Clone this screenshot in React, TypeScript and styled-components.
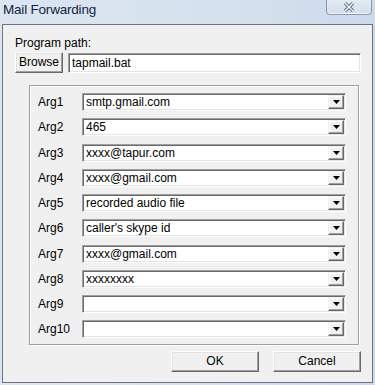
import React from "react";
import styled, { createGlobalStyle } from "styled-components";

const args = [
  "smtp.gmail.com",
  "465",
  "xxxx@tapur.com",
  "xxxx@gmail.com",
  "recorded audio file",
  "caller's skype id",
  "xxxx@gmail.com",
  "xxxxxxxx",
  "",
  "",
];

const App: React.FC = () => {
  return (
    <Window>
      <GlobalStyle />
      {/* 타이틀 바 */}
      <TitleBar>
        <Title>Mail Forwarding</Title>
        <CloseButton>
          <svg width="14" height="10" viewBox="0 0 14 10">
            <path d="M3 1 L11 9 M11 1 L3 9" stroke="#5b6b80" strokeWidth="3.2" />
            <path d="M3 1 L11 9 M11 1 L3 9" stroke="#f4f7fb" strokeWidth="1.4" />
          </svg>
        </CloseButton>
      </TitleBar>

      <Panel>
        <Label>Program path:</Label>
        <PathRow>
          <Button $width={48}>Browse</Button>
          <TextBox>tapmail.bat</TextBox>
        </PathRow>

        <GroupBox>
          {args.map((value, i) => (
            <ArgRow key={i}>
              <ArgLabel>Arg{i + 1}</ArgLabel>
              <Combo>
                <ComboText>{value}</ComboText>
                <DropButton>
                  <svg width="7" height="4" viewBox="0 0 7 4">
                    <path d="M0 0 H7 L3.5 4 Z" fill="#000" />
                  </svg>
                </DropButton>
              </Combo>
            </ArgRow>
          ))}
        </GroupBox>

        <ButtonRow>
          <Button $width={88}>OK</Button>
          <Button $width={88}>Cancel</Button>
        </ButtonRow>
      </Panel>
    </Window>
  );
};

export default App;

const GlobalStyle = createGlobalStyle`
  html, body {
    margin: 0;
    padding: 0;
  }
  body {
    font-family: "Liberation Sans", Arial, sans-serif;
    font-size: 12px;
    color: #000;
  }
`;

const Window = styled.div`
  width: 375px;
  height: 385px;
  box-sizing: border-box;
  display: flex;
  flex-direction: column;
  background: linear-gradient(90deg, #dce6f2 0%, #d5e1ee 60%, #cddaea 100%);
  overflow: hidden;
`;

const TitleBar = styled.div`
  height: 24px;
  display: flex;
  justify-content: space-between;
  align-items: flex-start;
  padding: 0 3px 0 3px;
`;

const Title = styled.div`
  font-family: "Liberation Sans", Arial, sans-serif;
  font-size: 13.5px;
  line-height: 18px;
  margin-top: 1px;
  color: #10253c;
  letter-spacing: -0.2px;
`;

const CloseButton = styled.div`
  width: 46px;
  height: 15px;
  box-sizing: border-box;
  border: 1px solid #8d9bb0;
  border-top: none;
  border-radius: 0 0 4px 4px;
  background: linear-gradient(#e3ebf4, #d3deeb);
  box-shadow: inset 0 -1px 0 #eef3f9;
  display: flex;
  align-items: center;
  justify-content: center;
`;

const Panel = styled.div`
  margin: 0 2px 2px 2px;
  flex: 1;
  box-sizing: border-box;
  border: 1px solid #6f747b;
  background: #f0f0f0;
  padding: 11px 11px 0 12px;
  display: flex;
  flex-direction: column;
`;

const Label = styled.div`
  line-height: 14px;
  height: 14px;
`;

const PathRow = styled.div`
  display: flex;
  gap: 5px;
  margin-top: 2px;
  height: 21px;
`;

const Button = styled.div<{ $width: number }>`
  width: ${(p) => p.$width}px;
  height: 21px;
  box-sizing: border-box;
  border: 1px solid;
  border-color: #ffffff #696969 #696969 #ffffff;
  box-shadow: inset -1px -1px 0 #a0a0a0, inset 1px 1px 0 #e3e3e3;
  background: #f0f0f0;
  display: flex;
  align-items: center;
  justify-content: center;
  line-height: 14px;
  padding-bottom: 1px;
`;

const TextBox = styled.div`
  flex: 1;
  box-sizing: border-box;
  height: 20px;
  margin-top: 1px;
  border: 1px solid;
  border-color: #a0a0a0 #ffffff #ffffff #a0a0a0;
  box-shadow: inset 1px 1px 0 #696969, inset -1px -1px 0 #e3e3e3;
  background: #fff;
  padding: 0 3px;
  display: flex;
  align-items: center;
  margin-right: 0;
`;

const GroupBox = styled.div`
  margin: 12px 2px 0 14px;
  height: 260px;
  box-sizing: border-box;
  border: 1px solid #a0a0a0;
  box-shadow: inset 1px 1px 0 #fff, 1px 1px 0 #fff;
  padding: 7px 12px 0 8px;
  display: flex;
  flex-direction: column;
  gap: 7.25px;
`;

const ArgRow = styled.div`
  display: flex;
  align-items: center;
  height: 18px;
`;

const ArgLabel = styled.div`
  width: 44px;
  flex: none;
`;

const Combo = styled.div`
  flex: 1;
  height: 18px;
  box-sizing: border-box;
  border: 1px solid;
  border-color: #a0a0a0 #ffffff #ffffff #a0a0a0;
  box-shadow: inset 1px 1px 0 #696969, inset -1px -1px 0 #e3e3e3;
  background: #fff;
  display: flex;
  align-items: stretch;
  padding: 1px 1px 1px 2px;
`;

const ComboText = styled.div`
  flex: 1;
  display: flex;
  align-items: center;
  padding-left: 1px;
  white-space: nowrap;
  overflow: hidden;
`;

const DropButton = styled.div`
  width: 16px;
  box-sizing: border-box;
  border: 1px solid;
  border-color: #f0f0f0 #696969 #696969 #f0f0f0;
  box-shadow: inset -1px -1px 0 #a0a0a0, inset 1px 1px 0 #fff;
  background: #f0f0f0;
  display: flex;
  align-items: center;
  justify-content: center;
`;

const ButtonRow = styled.div`
  display: flex;
  justify-content: flex-end;
  gap: 14px;
  margin-top: 6px;
`;
